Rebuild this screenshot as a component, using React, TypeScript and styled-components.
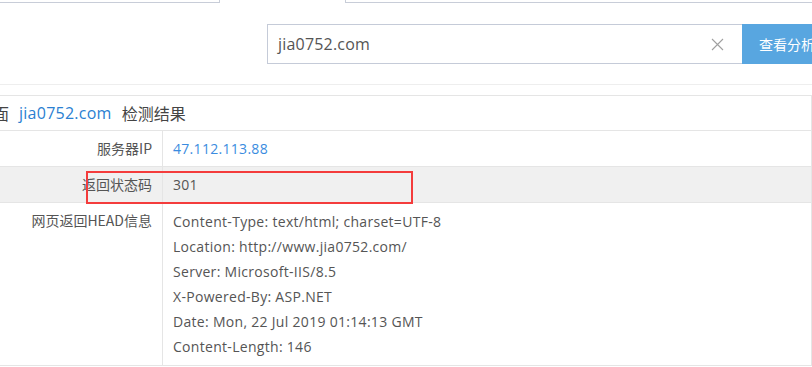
import React from "react";
import styled, { createGlobalStyle } from "styled-components";

const Global = createGlobalStyle`
  html, body { margin: 0; padding: 0; background: #fff; overflow: hidden; }
  body { width: 812px; height: 367px; font-family: "Open Sans", "Noto Sans CJK SC", sans-serif; color: #555; }
`;

const Page = styled.div`
  position: relative;
  width: 832px;
  margin-left: -20px;
`;

const TabBar = styled.div`
  display: flex;
  height: 3px;
`;

const Tab = styled.div<{ $w: number; $ml?: number }>`
  box-sizing: border-box;
  width: ${(p) => p.$w}px;
  margin-left: ${(p) => p.$ml ?? 0}px;
  height: 3px;
  border: 1px solid #c8cdd8;
  border-top: none;
  flex-shrink: 0;
`;

const SearchRow = styled.div`
  display: flex;
  margin-top: 21px;
  padding-left: 287px;
  height: 40px;
  width: 900px;
`;

const InputBox = styled.div`
  box-sizing: border-box;
  width: 475px;
  height: 40px;
  border: 1px solid #c5cbd8;
  border-right: none;
  display: flex;
  align-items: center;
  padding: 0 14px 0 10px;
`;

const InputText = styled.span`
  flex: 1;
  font-size: 16px;
  letter-spacing: 0.2px;
  color: #555;
`;

const ClearIcon = styled.svg`
  width: 13px;
  height: 13px;
  margin-right: 4px;
`;

const Button = styled.div`
  box-sizing: border-box;
  width: 90px;
  height: 40px;
  background: #58a6e0;
  color: #fff;
  font-size: 14px;
  font-family: "Noto Sans CJK SC", sans-serif;
  display: flex;
  align-items: center;
  padding-left: 17px;
`;

const Separator = styled.div`
  margin-top: 20px;
  height: 1px;
  background: #eeeeee;
`;

const ResultBox = styled.div`
  box-sizing: border-box;
  margin-top: 10px;
  width: 832px;
  border: 1px solid #e5e5e5;
`;

const Title = styled.div`
  height: 34px;
  border-bottom: 1px solid #e5e5e5;
  display: flex;
  align-items: center;
  padding-left: 12px;
  font-size: 16px;
  color: #444;
  font-family: "Noto Sans CJK SC", sans-serif;
`;

const TitleLink = styled.span`
  color: #2b7fd2;
  margin: 0 10px;
  letter-spacing: 0.25px;
  font-family: "Open Sans", sans-serif;
`;

const Row = styled.div<{ $alt?: boolean; $last?: boolean }>`
  display: grid;
  grid-template-columns: 182px 1fr;
  background: ${(p) => (p.$alt ? "#f0f0f0" : "#fff")};
  border-bottom: ${(p) => (p.$last ? "none" : "1px solid #e5e5e5")};
  min-height: 35px;
`;

const Label = styled.div`
  border-right: 1px solid #e5e5e5;
  text-align: right;
  padding: 7px 10px 0 0;
  font-size: 14px;
  line-height: 21px;
  color: #555;
  font-family: "Noto Sans CJK SC", sans-serif;
`;

const Value = styled.div<{ $link?: boolean }>`
  padding: 7px 0 0 10px;
  font-size: 14px;
  line-height: 21px;
  letter-spacing: 0.3px;
  color: ${(p) => (p.$link ? "#3a8ce0" : "#555")};
`;

const HeadList = styled.div`
  padding: 6px 0 6px 10px;
  font-size: 14px;
  line-height: 25px;
  letter-spacing: 0.3px;
  color: #555;
`;

const Mark = styled.div`
  position: absolute;
  left: 106px;
  top: 171px;
  width: 327px;
  height: 33px;
  box-sizing: border-box;
  border: 2px solid #f43c3c;
  pointer-events: none;
`;

const headers = [
  "Content-Type: text/html; charset=UTF-8",
  "Location: http://www.jia0752.com/",
  "Server: Microsoft-IIS/8.5",
  "X-Powered-By: ASP.NET",
  "Date: Mon, 22 Jul 2019 01:14:13 GMT",
  "Content-Length: 146",
];

export default function App() {
  return (
    <>
      <Global />
      <Page>
        <TabBar>
          <Tab $w={240} />
          <Tab $w={520} $ml={125} />
        </TabBar>
        <SearchRow>
          <InputBox>
            <InputText>jia0752.com</InputText>
            <ClearIcon viewBox="0 0 13 13">
              <path d="M1 1 L12 12 M12 1 L1 12" stroke="#a0a0a0" strokeWidth="1.1" fill="none" />
            </ClearIcon>
          </InputBox>
          <Button>查看分析</Button>
        </SearchRow>
        <Separator />
        <ResultBox>
          <Title>
            面<TitleLink>jia0752.com</TitleLink>检测结果
          </Title>
          <Row>
            <Label>服务器IP</Label>
            <Value $link>47.112.113.88</Value>
          </Row>
          <Row $alt>
            <Label>返回状态码</Label>
            <Value>301</Value>
          </Row>
          <Row $last>
            <Label>网页返回HEAD信息</Label>
            <HeadList>
              {headers.map((h) => (
                <div key={h}>{h}</div>
              ))}
            </HeadList>
          </Row>
        </ResultBox>
        <Mark />
      </Page>
    </>
  );
}
